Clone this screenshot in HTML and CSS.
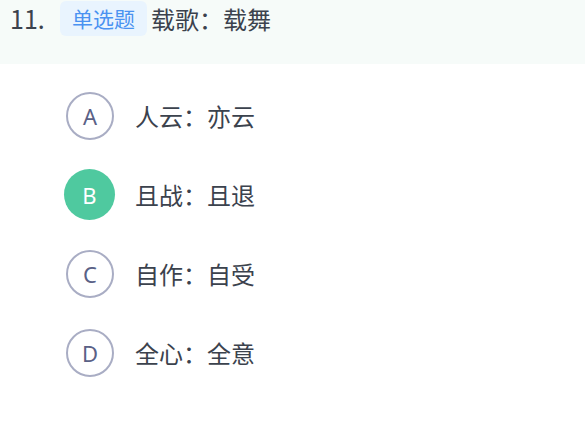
FILE: index.html
```html
<!DOCTYPE html>
<html lang="zh">
<head>
<meta charset="utf-8">
<link rel="stylesheet" href="styles.css">
</head>
<body>
<div class="question">
  <div class="title-row">
    <span class="num">11.</span>
    <span class="tag">单选题</span>
    <span class="stem">载歌：载舞</span>
  </div>
</div>
<ul class="options">
  <li class="option"><span class="letter">A</span><span class="text">人云：亦云</span></li>
  <li class="option selected"><span class="letter">B</span><span class="text">且战：且退</span></li>
  <li class="option"><span class="letter">C</span><span class="text">自作：自受</span></li>
  <li class="option"><span class="letter">D</span><span class="text">全心：全意</span></li>
</ul>
</body>
</html>
```
FILE: styles.css
```css
html, body {
  margin: 0;
  padding: 0;
  background: #ffffff;
  font-family: "Noto Sans CJK SC", "Noto Sans", sans-serif;
  color: #3b424d;
}
.question {
  background: #f6fbf9;
  height: 64px;
  box-sizing: border-box;
  padding: 1px 0 0 10px;
}
.title-row {
  display: flex;
  align-items: center;
  height: 35px;
}
.num {
  font-size: 25px;
  width: 50px;
  line-height: 35px;
}
.tag {
  background: #e9f4fe;
  color: #4a92f1;
  font-size: 21px;
  line-height: 35px;
  height: 35px;
  padding: 0 12px;
  border-radius: 6px;
  margin-right: 4px;
}
.stem {
  font-size: 24px;
  line-height: 35px;
}
.options {
  list-style: none;
  margin: 0;
  padding: 12px 0 0 66px;
}
.option {
  display: flex;
  align-items: center;
  height: 79px;
}
.letter {
  width: 48px;
  height: 48px;
  box-sizing: border-box;
  border: 2px solid #a9adc4;
  border-radius: 50%;
  display: flex;
  align-items: center;
  justify-content: center;
  font-family: "Noto Sans", sans-serif;
  font-size: 22px;
  color: #5a6186;
  margin-right: 21px;
}
.option.selected .letter {
  width: 51px;
  height: 51px;
  margin-left: -2px;
  margin-right: 20px;
  border: none;
  background: #4fc99f;
  color: #ffffff;
}
.text {
  font-size: 24px;
}
```
